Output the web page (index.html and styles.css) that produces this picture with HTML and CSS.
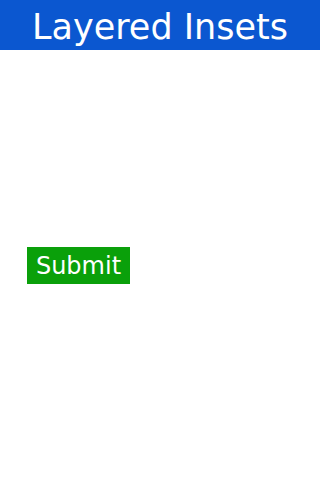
FILE: index.html
```html
<!DOCTYPE html>
<html lang="en">
<head>
  <meta charset="UTF-8">
  <meta name="viewport" content="width=device-width, initial-scale=1.0">
  <title>Layered Insets</title>
  <link rel="stylesheet" href="styles.css">
</head>
<body>
  <header class="topbar">
    <h1>Layered Insets</h1>
  </header>
  <main class="content">
    <button class="submit">Submit</button>
  </main>
</body>
</html>
```

FILE: styles.css
```css
body, html {
  margin: 0;
  padding: 0;
  font-family: 'DejaVu Sans', sans-serif;
  background: #fff;
}

.topbar {
  box-sizing: border-box;
  background-color: #0b57d0;
  height: 50px;
  padding-top: 4px;
  display: flex;
  align-items: center;
  justify-content: center;
}

.topbar h1 {
  margin: 0;
  color: #fff;
  font-size: 35px;
  font-weight: normal;
  line-height: 1;
}

.content {
  padding: 197px 27px 0;
}

.submit {
  display: block;
  width: 103px;
  height: 37px;
  padding: 0;
  border: none;
  border-radius: 0;
  background-color: #0aa00a;
  color: #fff;
  font-family: 'DejaVu Sans', sans-serif;
  font-size: 24px;
  line-height: 1;
}
```
